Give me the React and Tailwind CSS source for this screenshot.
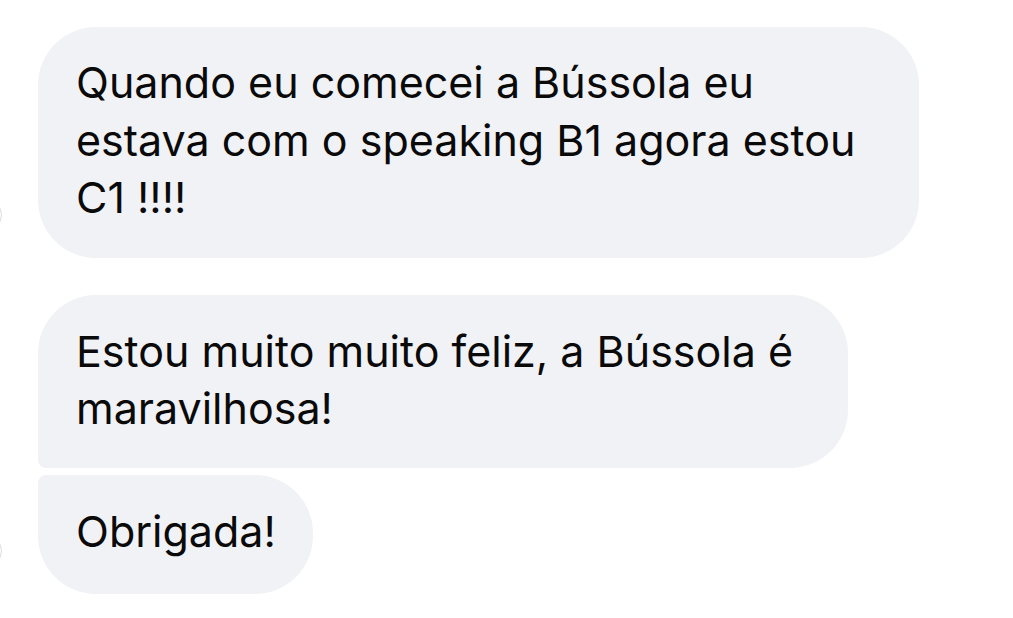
const messages = [
    { lines: ['Quando eu comecei a Bússola eu', 'estava com o speaking B1 agora estou', 'C1 !!!!'], shape: 'rounded-[58px]', width: 'w-[881px]', avatar: true, gap: 'mb-[37px]', pad: 'pt-[27px] pb-[31px]' },
    { lines: ['Estou muito muito feliz, a Bússola é', 'maravilhosa!'], shape: 'rounded-[58px] rounded-bl-[8px]', width: 'w-[810px]', avatar: false, gap: 'mb-[7px]', pad: 'pt-[28px] pb-[30px]' },
    { lines: ['Obrigada!'], shape: 'rounded-[58px] rounded-tl-[8px]', width: 'w-[275px]', avatar: true, gap: '', pad: 'pt-[28px] pb-[34px]' },
]

function Avatar({ visible }) {
    return (
        <div className="w-[38px] shrink-0 flex items-end self-stretch">
            {visible && (
                <div className="-ml-[30px] mb-[27px] h-[32px] w-[32px] rounded-full border border-[#dcdcdc] bg-white" />
            )}
        </div>
    )
}

export default function App() {
    return (
        <div className="w-[1013px] h-[618px] overflow-hidden bg-white pt-[27px]" style={{ fontFamily: 'Inter, "Noto Sans", sans-serif' }}>
            {messages.map((m, i) => (
                <div key={i} className={`flex ${m.gap}`}>
                    <Avatar visible={m.avatar} />
                    <div className={`bg-[#f1f2f5] ${m.shape} ${m.width} pl-[38px] ${m.pad} text-[43px] leading-[57.5px] text-[#0a0a0a] whitespace-nowrap`}>
                        {m.lines.map((l, j) => (
                            <div key={j}>{l}</div>
                        ))}
                    </div>
                </div>
            ))}
        </div>
    )
}
